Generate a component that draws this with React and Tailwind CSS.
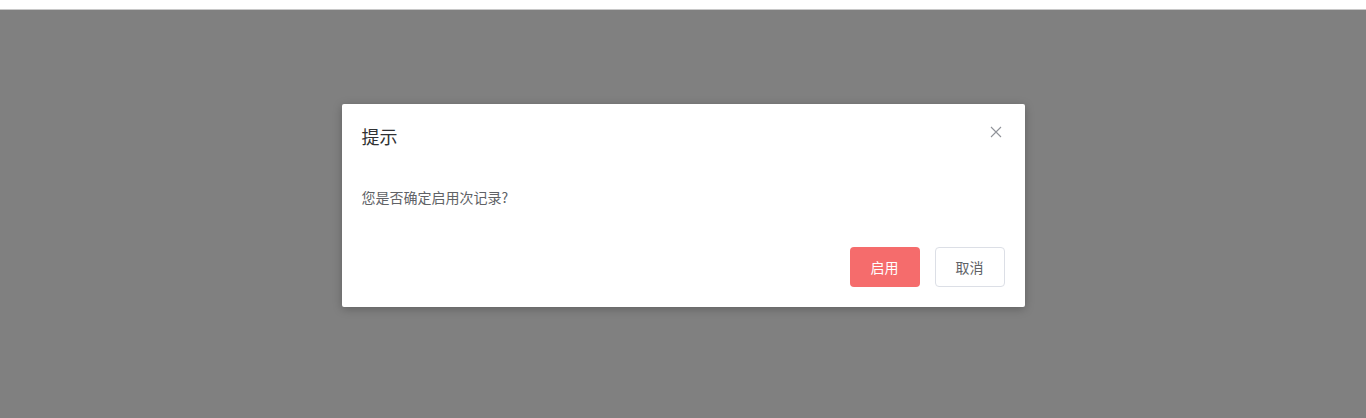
import React from 'react';

export default function App() {
  return (
    <div className="w-[1366px] h-[418px] bg-white font-['Noto_Sans_CJK_SC','Noto_Sans',sans-serif] overflow-hidden flex flex-col">
      {/* page top strip */}
      <div className="h-[10px] bg-white border-b border-[#c8c8c8] shrink-0" />

      {/* overlay */}
      <div className="flex-1 bg-[#808080] pt-[94px] flex justify-center">
        <div className="w-[683px] h-[203px] bg-white rounded-[2px] shadow-[0_2px_10px_rgba(0,0,0,0.25)] relative flex flex-col">
          <div className="px-5 pt-5 pb-[10px]">
            <span className="block text-[18px] leading-6 text-[#303133]">提示</span>
          </div>
          <svg
            className="absolute top-[22px] right-[23px]"
            width="12"
            height="12"
            viewBox="0 0 12 12"
            fill="none"
            stroke="#909399"
            strokeWidth="1.1"
          >
            <path d="M1 1L11 11M11 1L1 11" />
          </svg>

          <div className="px-5 pt-[29px] pb-[29px]">
            <p className="text-[14px] leading-[21px] text-[#606266]">您是否确定启用次记录?</p>
          </div>

          <div className="px-5 pt-[10px] flex justify-end gap-[15px]">
            <button className="w-[70px] h-[40px] rounded-[4px] bg-[#f56c6c] text-white text-[14px]">
              启用
            </button>
            <button className="w-[70px] h-[40px] rounded-[4px] bg-white border border-[#dcdfe6] text-[#606266] text-[14px]">
              取消
            </button>
          </div>
        </div>
      </div>
    </div>
  );
}
